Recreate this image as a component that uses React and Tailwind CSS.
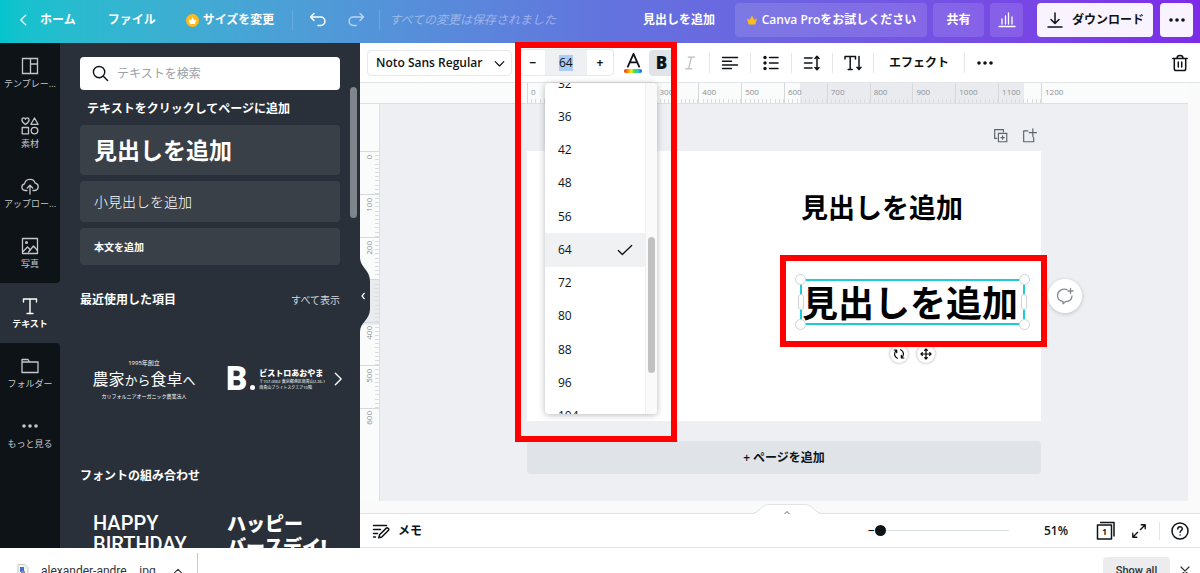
import { useState } from 'react';

const navItems = [
  { id: 'template', label: 'テンプレー...' },
  { id: 'elements', label: '素材' },
  { id: 'upload', label: 'アップロー...' },
  { id: 'photo', label: '写真' },
  { id: 'text', label: 'テキスト' },
  { id: 'folder', label: 'フォルダー' },
  { id: 'more', label: 'もっと見る' },
];

const fontSizes = [32, 36, 42, 48, 56, 64, 72, 80, 88, 96, 104];
const minorTicks = [0, 1, 2, 3, 4, 5, 6, 7, 8, 9];

function Icon({ size = 18, stroke = 1.5, className = '', children }) {
  return (
    <svg
      width={size}
      height={size}
      viewBox="0 0 18 18"
      fill="none"
      stroke="currentColor"
      strokeWidth={stroke}
      strokeLinecap="round"
      strokeLinejoin="round"
      className={`shrink-0 ${className}`}
      aria-hidden="true"
    >
      {children}
    </svg>
  );
}

function NavIcon({ id }) {
  switch (id) {
    case 'template':
      return (
        <Icon stroke={1.3}>
          <path d="M1.5 1.5h15v15h-15zM9.5 1.5v15M9.5 7h7" strokeLinejoin="miter" />
        </Icon>
      );
    case 'elements':
      return (
        <Icon stroke={1.3}>
          <path d="M4.5 7.5C2 5.7.9 4.4.9 2.9.9.6 3.6.2 4.5 2.2 5.4.2 8.1.6 8.1 2.9 8.1 4.4 7 5.7 4.5 7.5z" />
          <path d="M13.5 1l3.6 6.3H9.9z" />
          <path d="M1.2 10.5h6.3v6.3H1.2z" />
          <circle cx="13.5" cy="13.6" r="3.3" />
        </Icon>
      );
    case 'upload':
      return (
        <Icon stroke={1.3}>
          <path d="M6 13.5H4.2A3.4 3.4 0 0 1 3.5 6.8 5.6 5.6 0 0 1 14.3 6.2a3.7 3.7 0 0 1-.5 7.3H12M9 17V8.5M6.3 11L9 8.3l2.7 2.7" />
        </Icon>
      );
    case 'photo':
      return (
        <Icon stroke={1.3}>
          <path d="M1.5 1.5h15v15h-15z" />
          <path d="M2 14.5l4.5-4.5 3 3M7.5 15l5-6 4 4.5" />
          <circle cx="5.5" cy="5.5" r=".9" />
        </Icon>
      );
    case 'text':
      return (
        <Icon stroke={1.4}>
          <path d="M2.5 5V2h13v3M9 2v14.5M6 16.5h6" />
        </Icon>
      );
    case 'folder':
      return (
        <Icon stroke={1.3}>
          <path d="M1 15.5v-13h6l1.5 2.5H17v10.5zM1 5h7.5" />
        </Icon>
      );
    default:
      return <Dots />;
  }
}

function Dots() {
  return (
    <svg width="18" height="18" viewBox="0 0 18 18" fill="currentColor" aria-hidden="true">
      <circle cx="3" cy="9" r="1.8" />
      <circle cx="9" cy="9" r="1.8" />
      <circle cx="15" cy="9" r="1.8" />
    </svg>
  );
}

function Crown({ size, className = '' }) {
  return (
    <svg width={size} height={size} viewBox="0 0 12 12" fill="currentColor" className={className} aria-hidden="true">
      <path d="M2.6 10.5L1 4.2l2.6 1.9L6 1.8l2.4 4.3L11 4.2l-1.6 6.3z" strokeLinejoin="round" />
    </svg>
  );
}

function Header() {
  return (
    <header className="flex h-[43px] shrink-0 items-center bg-linear-to-r from-[#04c4cc] via-[#6274de] to-[#7d2ae8] pr-[7px] pb-[3px] pl-4 text-[12px] font-semibold text-white">
      <button className="flex items-center gap-2">
        <Icon size={16}>
          <path d="M11 3.500L5.500 9l5.500 5.500" />
        </Icon>
        ホーム
      </button>
      <button className="ml-8">ファイル</button>
      <button className="ml-[30px] flex items-center gap-1">
        <span className="flex size-[13px] items-center justify-center rounded-full bg-[#fdbc1b]">
          <Crown size={9} />
        </span>
        サイズを変更
      </button>
      <span className="ml-[18px] h-5 w-px bg-white/15" />
      <button className="ml-4" aria-label="元に戻す">
        <Icon>
          <path d="M5 2.500L1.500 6 5 9.500M1.500 6h10.200a4.200 4.200 0 0 1 0 8.400H9" />
        </Icon>
      </button>
      <button className="ml-5 opacity-60" aria-label="やり直す">
        <Icon>
          <path d="M13 2.500L16.500 6 13 9.500M16.500 6H6.300a4.200 4.200 0 0 0 0 8.400H9" />
        </Icon>
      </button>
      <span className="ml-[14px] h-5 w-px bg-white/15" />
      <span className="ml-[9px] font-normal whitespace-nowrap text-white/40 italic">すべての変更は保存されました</span>
      <span className="mr-[20px] ml-auto whitespace-nowrap">見出しを追加</span>
      <button className="flex h-[34px] w-[192px] items-center justify-center gap-1 rounded bg-white/12 whitespace-nowrap">
        <Crown size={12} className="text-[#fdbc1b]" />
        Canva Proをお試しください
      </button>
      <button className="ml-[6px] h-[34px] w-[51px] rounded bg-white/12">共有</button>
      <button className="ml-[6px] flex h-[34px] w-[33px] items-center justify-center rounded bg-white/12" aria-label="統計">
        <Icon stroke={1.3}>
          <path d="M1 15.500h16M4 13V8M7.500 13V5M10.500 13V2M14 13V6" />
        </Icon>
      </button>
      <button className="ml-[14px] flex h-[34px] w-[116px] items-center justify-center gap-2 rounded bg-[#f8f3fe] whitespace-nowrap text-[#0e1318]">
        <Icon>
          <path d="M9 2v10M5 8.500l4 4 4-4M2 16h14" />
        </Icon>
        ダウンロード
      </button>
      <button className="ml-[7px] flex h-[34px] w-[33px] items-center justify-center rounded bg-[#f8f3fe] text-[#0e1318]" aria-label="その他">
        <Dots />
      </button>
    </header>
  );
}

function Sidebar() {
  return (
    <nav className="w-[60px] shrink-0 bg-[#293039]">
      <ul className="flex h-full flex-col text-[9px] text-[#c3c6ca]">
        {navItems.map((item, i) => (
          <li
            key={item.id}
            className={
              item.id === 'text'
                ? 'h-[60px] bg-[#293039] font-semibold text-white'
                : item.id === 'photo'
                  ? 'h-[60px] rounded-br bg-[#0e1318]'
                  : item.id === 'folder'
                    ? 'h-[60px] rounded-tr bg-[#0e1318]'
                    : i === navItems.length - 1
                      ? 'flex-1 bg-[#0e1318]'
                      : 'h-[60px] bg-[#0e1318]'
            }
          >
            <button className="flex w-full flex-col items-center gap-[3px] pt-[14px] leading-[12px] whitespace-nowrap">
              <NavIcon id={item.id} />
              {item.label}
            </button>
          </li>
        ))}
      </ul>
    </nav>
  );
}

function TextPanel() {
  return (
    <aside className="relative w-[300px] shrink-0 bg-[#293039] pt-[14px] pr-5 pl-5 text-[12px] text-white">
      <label className="flex h-[33px] items-center gap-2 rounded bg-white px-3 text-[#0e1318]">
        <Icon size={17}>
          <circle cx="7.500" cy="7.500" r="6" />
          <path d="M12 12l4.500 4.500" />
        </Icon>
        <input type="text" placeholder="テキストを検索" className="w-full min-w-0 bg-transparent outline-none placeholder:text-[#9da1a6]" aria-label="テキストを検索" />
      </label>
      <h2 className="mt-[9px] pl-[7px] leading-[20px] font-semibold">テキストをクリックしてページに追加</h2>
      <div className="mt-[6px] flex flex-col gap-[6px]">
        <button className="h-[50px] rounded bg-[#3a4048] px-[14px] text-left text-[23px] leading-[30px] font-bold">見出しを追加</button>
        <button className="h-[41px] rounded bg-[#3a4048] px-[14px] text-left text-[14px] leading-[20px] font-light">小見出しを追加</button>
        <button className="h-[37px] rounded bg-[#3a4048] px-[14px] text-left text-[10px] leading-[16px] font-semibold">本文を追加</button>
      </div>

      <div className="mt-[25px] flex items-center justify-between">
        <h2 className="leading-[20px] font-semibold">最近使用した項目</h2>
        <a href="#recent" className="text-[10px] text-[#d5d7d9]">すべて表示</a>
      </div>
      <div className="mt-[48px] flex h-[42px] items-center">
        <button className="flex w-[128px] flex-col items-center whitespace-nowrap">
          <span className="text-[6px] leading-[8px]">1995年創立</span>
          <span className="text-[16px] leading-[24px]">
            農家<span className="text-[13px]">から</span>食卓<span className="text-[13px]">へ</span>
          </span>
          <span className="text-[5px] leading-[8px]">カリフォルニアオーガニック農業法人</span>
        </button>
        <button className="ml-[18px] flex items-center whitespace-nowrap">
          <span className="font-[Roboto] text-[33px] leading-[28px] font-black">B</span>
          <span className="mt-4 ml-[3px] size-[5px] rounded-full bg-white" />
          <span className="ml-[4px] flex flex-col text-left">
            <span className="text-[8px] leading-[12px] font-black">ビストロあおやま</span>
            <span className="text-[4px] leading-[6px]">〒107-0062 東京都港区南青山2-26-1</span>
            <span className="text-[4px] leading-[6px]">南青山ブライトスクエア10階</span>
          </span>
        </button>
        <button className="-mr-[6px] ml-auto" aria-label="次へ">
          <Icon size={16}>
            <path d="M6 2.500L12.500 9 6 15.500" />
          </Icon>
        </button>
      </div>

      <h2 className="mt-[66px] leading-[20px] font-semibold">フォントの組み合わせ</h2>
      <div className="mt-[27px] flex h-[35px] overflow-hidden pl-[13px] whitespace-nowrap">
        <button className="w-[134px] self-start text-left font-[Roboto] text-[20px] leading-[21px] font-medium">
          HAPPY
          <br />
          BIRTHDAY
        </button>
        <button className="self-start text-left text-[19px] leading-[23px] font-black">
          ハッピー
          <br />
          バースデイ!
        </button>
      </div>

      {/* scrollbar */}
      <div className="absolute top-[44px] right-[3px] h-[131px] w-[7px] rounded-full bg-[#80858b]" />
      {/* collapse handle */}
      <button className="absolute top-[212px] left-full z-10 text-[#293039]" aria-label="パネルを閉じる">
        <svg width="11" height="80" viewBox="0 0 11 80" className="block" aria-hidden="true">
          <path d="M0 3c0 9 10 12 10 23v28c0 11-10 13-10 23z" fill="currentColor" />
          <path d="M4.500 38L2 41 4.500 44" fill="none" stroke="#fff" strokeWidth="1.200" />
        </svg>
      </button>
    </aside>
  );
}

function SizeMenu({ size, onPick }) {
  return (
    <div className="absolute top-[33px] left-6 z-20 flex h-[331px] w-[112px] overflow-hidden rounded-sm bg-white shadow-[0_1px_6px_rgba(14,19,24,0.3)]">
      <ul role="listbox" aria-label="フォントサイズ" className="-mt-[16px] flex h-[366px] flex-1 flex-col text-[12px] text-[#0e1318]">
        {fontSizes.map((n) => (
          <li
            key={n}
            role="option"
            aria-selected={n === size}
            onClick={() => onPick(n)}
            className={n === size ? 'flex flex-1 items-center justify-between bg-[#f0f1f3] pr-3 pl-[13px]' : 'flex flex-1 items-center pl-[13px]'}
          >
            {n}
            {n === size && (
              <Icon size={16}>
                <path d="M1.500 9.500l4.500 4.500L16.500 4" />
              </Icon>
            )}
          </li>
        ))}
      </ul>
      <div className="w-3 border-l border-[#f0f0f0] bg-[#fafafa] px-[2px] pt-[154px]">
        <div className="h-[136px] rounded-full bg-[#c1c1c1]" />
      </div>
    </div>
  );
}

function Toolbar() {
  const [size, setSize] = useState(64);

  return (
    <div className="flex h-10 shrink-0 items-center border-b border-[#e3e5e8] bg-white pr-[11px] pl-[7px] text-[12px] text-[#0e1318]">
      <label className="relative w-[145px]">
        <select className="h-[26px] w-full appearance-none rounded border border-[#e6e8eb] bg-white pl-2 font-semibold outline-none" aria-label="フォント">
          <option>Noto Sans Regular</option>
        </select>
        <Icon size={11} stroke={2} className="pointer-events-none absolute top-[8px] right-[7px]">
          <path d="M2 6l7 7 7-7" />
        </Icon>
      </label>
      <div className="relative ml-2 flex h-[27px] rounded border border-[#e6e8eb]">
        <button className="w-6 font-bold" aria-label="小さく" onClick={() => setSize(size - 1)}>
          −
        </button>
        <label className="flex w-[42px] items-center justify-center bg-[#eef0f4]">
          <input type="text" value={size} onChange={(e) => setSize(Number(e.target.value) || 0)} className="h-4 w-[14px] bg-[#a9cdf5] p-0 outline-none" aria-label="サイズ" />
        </label>
        <button className="w-[26px] font-bold" aria-label="大きく" onClick={() => setSize(size + 1)}>
          +
        </button>
        <SizeMenu size={size} onPick={setSize} />
      </div>
      <button className="ml-[4px] flex w-[30px] flex-col items-center" aria-label="テキストの色">
        <Icon size={17} stroke={1.9}>
          <path d="M3 15.500L9 2l6 13.500M5 11h8" />
        </Icon>
        <span className="h-[4px] w-[18px] rounded-sm bg-[linear-gradient(90deg,#ff1e00,#ff8a00,#f4ee1c,#3fdc3f,#22c7e8,#1b3cff)]" />
      </button>
      <button className="ml-px h-[26px] w-[25px] rounded bg-[#e0e3e8] text-[17px] leading-[26px] font-extrabold">B</button>
      <button className="mr-[3px] flex w-8 justify-center text-[#b9bcc1]" aria-label="斜体">
        <Icon size={16} stroke={1.4}>
          <path d="M7 2.500h7M4 15.500h7M10.500 2.500l-3 13" />
        </Icon>
      </button>
      <button className="flex h-5 w-[41px] items-center justify-center border-l border-[#e3e5e8]" aria-label="配置">
        <Icon>
          <path d="M1.500 3.500h15M1.500 7.200h9M1.500 10.900h15M1.500 14.600h9" />
        </Icon>
      </button>
      <button className="flex h-5 w-[41px] items-center justify-center border-l border-[#e3e5e8]" aria-label="リスト">
        <Icon>
          <path d="M7.500 3.500h8.500M7.500 9h8.500M7.500 14.500h8.500" />
          <g fill="currentColor" stroke="none">
            <circle cx="3" cy="3.500" r="1.700" />
            <circle cx="3" cy="9" r="1.700" />
            <circle cx="3" cy="14.500" r="1.700" />
          </g>
        </Icon>
      </button>
      <button className="flex h-5 w-[41px] items-center justify-center border-l border-[#e3e5e8]" aria-label="間隔">
        <Icon>
          <path d="M1.500 4h7.500M1.500 9h7.500M1.500 14h7.500M14 2.500v13M12 4.500l2-2.300 2 2.300M12 13.500l2 2.300 2-2.300" />
        </Icon>
      </button>
      <button className="flex h-5 w-[41px] items-center justify-center border-l border-[#e3e5e8]" aria-label="縦書き">
        <Icon>
          <path d="M1 5V2.500h10.500V5M6.200 2.500v13M4.200 15.500h4M15 2.500v13M13 13.300l2 2.300 2-2.300" />
        </Icon>
      </button>
      <button className="h-5 border-l border-[#e3e5e8] px-[15px] leading-[18px] font-semibold whitespace-nowrap">エフェクト</button>
      <button className="flex h-5 w-[41px] items-center justify-center border-l border-[#e3e5e8]" aria-label="その他">
        <Dots />
      </button>
      <button className="ml-auto" aria-label="削除">
        <Icon>
          <path d="M1.800 4.500h14.400M3.300 4.500v10.200c0 1.200.7 1.800 1.800 1.800h7.800c1.100 0 1.800-.6 1.800-1.800V4.500M6 4.200C6 2.400 7 1.500 9 1.500s3 .9 3 2.700M7.300 8v5M10.700 8v5" />
        </Icon>
      </button>
    </div>
  );
}

function TopRuler() {
  return (
    <div className="flex h-[21px] shrink-0 justify-center border-b border-[#dcdfe3] bg-[#fafbfb] pl-5 text-[8px] text-[#8b9096]">
      <div className="relative flex w-[514px]">
        <div className="absolute top-0 right-[17px] h-full w-[224px] bg-[#e9ebef]" />
        {[0, 100, 200, 300, 400, 500, 600, 700, 800, 900, 1000, 1100].map((n) => (
          <div key={n} className="relative flex flex-1 items-end border-l border-[#d5d8dc]">
            <span className="absolute top-[4px] left-[3px] leading-[10px]">{n}</span>
            {minorTicks.map((t) => (
              <span key={t} className="h-1 flex-1 border-r border-[#dadde1]" />
            ))}
          </div>
        ))}
        <span className="absolute top-0 left-full h-full border-l border-[#d5d8dc] pt-[4px] pl-[3px] leading-[10px]">1200</span>
      </div>
    </div>
  );
}

function LeftRuler() {
  return (
    <div className="w-5 shrink-0 border-r border-[#dcdfe3] bg-[#fafbfb] pt-[47px] text-[8px] text-[#8b9096]">
      <div className="relative flex h-[257px] flex-col">
        <div className="absolute top-[129px] left-0 h-[45px] w-full bg-[#e9ebef]" />
        {[0, 100, 200, 300, 400, 500].map((n) => (
          <div key={n} className="relative flex flex-1 flex-col items-end border-t border-[#d5d8dc]">
            {n !== 300 && <span className="absolute top-[3px] left-[4px] rotate-180 leading-[10px] [writing-mode:vertical-rl]">{n}</span>}
            {minorTicks.map((t) => (
              <span key={t} className="w-1 flex-1 border-b border-[#dadde1]" />
            ))}
          </div>
        ))}
        <span className="absolute top-full left-0 w-full border-t border-[#d5d8dc]" />
        <span className="absolute top-[260px] left-[4px] rotate-180 leading-[10px] [writing-mode:vertical-rl]">600</span>
      </div>
    </div>
  );
}

function Handle({ className }) {
  return <span className={`absolute border border-[#cfd3da] bg-white ${className}`} />;
}

function Page() {
  return (
    <div className="relative h-[270px] bg-white text-black">
      <p className="absolute top-[37px] left-[274px] text-[27px] leading-[40px] font-bold whitespace-nowrap">見出しを追加</p>
      <div className="absolute top-[128px] left-[273px] h-[46px] w-[225px] border-2 border-[#1fcbd8]">
        <p className="mt-[2px] text-[36px] leading-[42px] font-bold whitespace-nowrap">見出しを追加</p>
        <Handle className="-top-[7px] -left-[7px] size-[11px] rounded-full" />
        <Handle className="-top-[7px] -right-[7px] size-[11px] rounded-full" />
        <Handle className="-bottom-[7px] -left-[7px] size-[11px] rounded-full" />
        <Handle className="-right-[7px] -bottom-[7px] size-[11px] rounded-full" />
        <Handle className="top-[13px] -left-[4px] h-4 w-[6px] rounded-full" />
        <Handle className="top-[13px] -right-[4px] h-4 w-[6px] rounded-full" />
      </div>
      <button className="absolute top-[194px] left-[363px] flex size-[18px] items-center justify-center rounded-full bg-white shadow-[0_0_3px_rgba(14,19,24,0.4)]" aria-label="回転">
        <Icon size={12} stroke={1.800}>
          <path d="M6.500 15.500C1.500 13 1 7 5 3.500M1.800 3H5.500v3.800M11.500 2.500c5 2.500 5.500 8.500 1.500 12M16.200 15H12.500v-3.800" />
        </Icon>
      </button>
      <button className="absolute top-[194px] left-[390px] flex size-[18px] items-center justify-center rounded-full bg-white shadow-[0_0_3px_rgba(14,19,24,0.4)]" aria-label="移動">
        <Icon size={12} stroke={1.800}>
          <path d="M9 1.500v15M1.500 9h15M7 3.500l2-2 2 2M7 14.500l2 2 2-2M3.500 7l-2 2 2 2M14.500 7l2 2-2 2" />
        </Icon>
      </button>
      <button className="absolute top-[128px] left-[521px] flex size-[34px] items-center justify-center rounded-full bg-white text-[#85898f] shadow-[0_1px_4px_rgba(14,19,24,0.2)]" aria-label="コメント">
        <Icon stroke={1.3}>
          <path d="M11 2.600C6 1.200 1.500 4 1.500 8.500c0 3.500 2.500 5.500 5.500 6v2.300l2.800-2.200c4-.3 6-2.600 6.200-5.600M14.500 1.500v5M12 4h5" />
        </Icon>
      </button>
    </div>
  );
}

function Canvas() {
  return (
    <div className="flex flex-1 justify-center overflow-hidden bg-[#edeff3]">
      <div className="w-[514px] pt-[23px]">
        <div className="mb-2 flex h-4 items-center justify-end gap-[14px] pr-1 text-[#5d646c]">
          <button aria-label="ページを複製">
            <Icon size={15} stroke={1.4}>
              <path d="M4.500 12.500h-2.500v-10.500h10.500v2.500M6.500 6.500h10v10h-10zM11.500 9.500v4M9.500 11.500h4" strokeLinejoin="miter" />
            </Icon>
          </button>
          <button aria-label="ページを追加">
            <Icon size={15} stroke={1.4}>
              <path d="M7 3.500H2v13h12v-5M13 1v9.500M8.500 5.500h9" />
            </Icon>
          </button>
        </div>
        <Page />
        <button className="mt-5 h-[33px] w-full rounded-sm bg-[#e0e4e8] text-[12px] font-semibold text-[#0e1318]">+ ページを追加</button>
      </div>
    </div>
  );
}

function BottomBar() {
  return (
    <div className="relative flex h-[35px] shrink-0 items-center border-y border-[#e0e2e5] bg-white pr-[11px] pl-3 text-[12px] font-semibold text-[#0e1318]">
      <button className="flex items-center gap-2">
        <Icon>
          <path d="M1.500 3.500h13M1.500 7.500h7M1.500 11.500h4M1.500 15h2" />
          <path d="M6.800 15.800l.8-3 6.700-6.700c1-1 3.200.9 2.200 2.100l-6.700 6.800z" />
        </Icon>
        メモ
      </button>
      <button className="absolute -top-[10px] left-1/2 ml-[7px] flex -translate-x-1/2 text-[#5d646c]" aria-label="ページ一覧を開く">
        <svg width="72" height="12" viewBox="0 0 72 12" aria-hidden="true">
          <path d="M0 10C9 10 9 .5 19 .5h34c10 0 10 9.500 19 9.500v2H0z" fill="#fff" />
          <path d="M0 9.500C9 9.500 9 .5 19 .5h34c10 0 10 9 19 9" fill="none" stroke="#e0e2e5" />
          <path d="M33.500 10l2.500-2.500 2.500 2.500" fill="none" stroke="currentColor" />
        </svg>
      </button>
      <label className="ml-auto flex items-center">
        −
        <input
          type="range"
          min="51"
          max="500"
          defaultValue="51"
          aria-label="ズーム"
          className="h-[11px] w-[134px] appearance-none bg-linear-to-b from-transparent from-45% via-[#d9dfe2] via-50% to-transparent to-55% [&::-webkit-slider-thumb]:size-[11px] [&::-webkit-slider-thumb]:appearance-none [&::-webkit-slider-thumb]:rounded-full [&::-webkit-slider-thumb]:bg-[#0e1318]"
        />
      </label>
      <span className="ml-[35px]">51%</span>
      <button className="ml-[28px]" aria-label="1ページ">
        <svg width="20" height="20" viewBox="0 0 20 20" fill="none" stroke="currentColor" strokeWidth="1.500" strokeLinejoin="round" aria-hidden="true">
          <path d="M1.500 4h14v14h-14zM4 1.500h14V15.500" />
          <text x="8.500" y="14" textAnchor="middle" fontSize="8" fontWeight="700" fill="currentColor" stroke="none">
            1
          </text>
        </svg>
      </button>
      <button className="ml-[15px]" aria-label="全画面">
        <Icon size={16}>
          <path d="M10.500 7.500L16 2M11.500 2H16v4.500M7.500 10.500L2 16M6.500 16H2v-4.500" />
        </Icon>
      </button>
      <span className="ml-3 h-[18px] w-px bg-[#e3e5e8]" />
      <button className="ml-[11px]" aria-label="ヘルプ">
        <Icon>
          <circle cx="9" cy="9" r="8" />
          <path d="M6.800 7c0-3 4.500-3 4.500-.2 0 1.700-2.200 1.700-2.200 3.500M9.100 12.900v.2" />
        </Icon>
      </button>
    </div>
  );
}

function DownloadShelf() {
  return (
    <div className="h-[25px] shrink-0 overflow-hidden bg-white font-['Roboto','Noto_Sans_CJK_JP',sans-serif] text-[#303438]">
      <div className="flex h-[46px] items-center pr-[9px] pl-[17px]">
        <svg width="12" height="14" viewBox="0 0 12 14" aria-hidden="true">
          <path d="M1 .5h7l3 3v10H1z" fill="#f4f4f4" stroke="#c9c9c9" />
          <path d="M3 3h4v5H3z" fill="#4472c4" />
          <path d="M4 7h4v3H4z" fill="#8a8f99" />
        </svg>
        <a href="#download" className="ml-3 text-[12px]">alexander-andre....jpg</a>
        <button className="ml-[17px]" aria-label="メニュー">
          <Icon size={10} stroke={2}>
            <path d="M3 12l6-6 6 6" />
          </Icon>
        </button>
        <span className="ml-[14px] h-9 w-px bg-[#c9cbcd]" />
        <button className="ml-auto h-[28px] w-[67px] rounded bg-[#ececee] text-[11px] font-medium">Show all</button>
        <button className="ml-[9px]" aria-label="閉じる">
          <Icon size={12} stroke={1.8}>
            <path d="M3 3l12 12M15 3L3 15" />
          </Icon>
        </button>
      </div>
    </div>
  );
}

export default function App() {
  return (
    <div className="relative flex h-screen flex-col overflow-hidden bg-white font-['Open_Sans','Noto_Sans_CJK_JP',sans-serif]">
      <Header />
      <div className="flex min-h-0 flex-1">
        <Sidebar />
        <TextPanel />
        <main className="flex min-w-0 flex-1 flex-col">
          <Toolbar />
          <div className="flex min-h-0 flex-1 flex-col bg-[#fafafb] pr-3 pb-3">
            <TopRuler />
            <div className="flex min-h-0 flex-1">
              <LeftRuler />
              <Canvas />
            </div>
          </div>
          <BottomBar />
        </main>
      </div>
      <DownloadShelf />

      {/* highlight frames */}
      <div className="pointer-events-none absolute top-[42px] left-[515px] z-30 h-[400px] w-[162px] border-6 border-[#fe0000]" />
      <div className="pointer-events-none absolute top-[255px] left-[780px] z-30 h-[92px] w-[267px] border-6 border-[#fe0000]" />
    </div>
  );
}
